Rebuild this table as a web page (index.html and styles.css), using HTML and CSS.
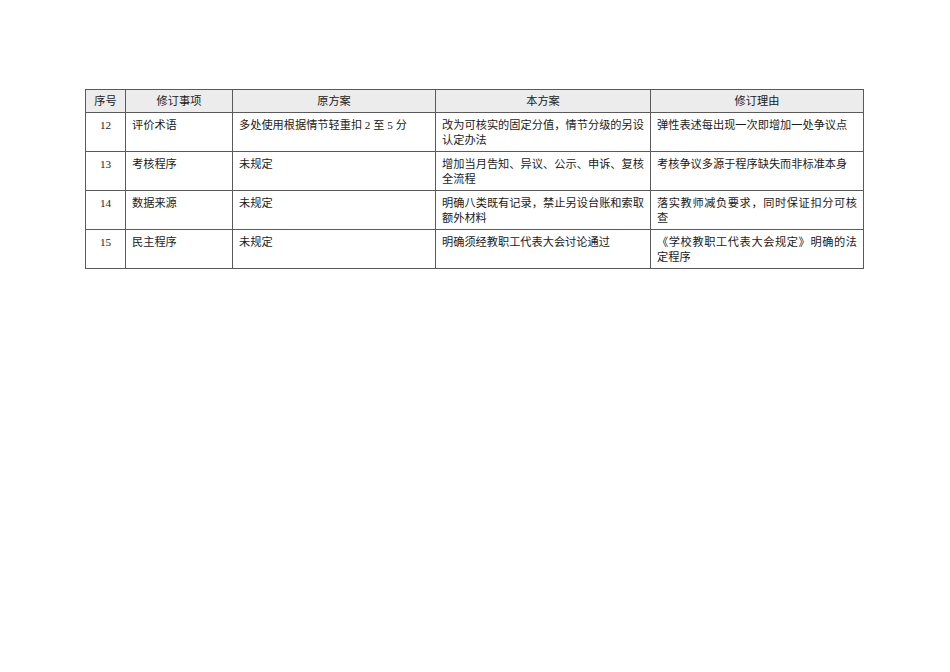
FILE: index.html
```html
<!DOCTYPE html>
<html lang="zh">
<head>
<meta charset="utf-8">
<link rel="stylesheet" href="styles.css">
</head>
<body>
<div class="page">
<table class="rev">
<colgroup>
<col class="c1"><col class="c2"><col class="c3"><col class="c4"><col class="c5">
</colgroup>
<thead>
<tr><th>序号</th><th>修订事项</th><th>原方案</th><th>本方案</th><th>修订理由</th></tr>
</thead>
<tbody>
<tr><td class="num">12</td><td>评价术语</td><td>多处使用根据情节轻重扣 2 至 5 分</td><td>改为可核实的固定分值，情节分级的另设认定办法</td><td>弹性表述每出现一次即增加一处争议点</td></tr>
<tr><td class="num">13</td><td>考核程序</td><td>未规定</td><td>增加当月告知、异议、公示、申诉、复核全流程</td><td>考核争议多源于程序缺失而非标准本身</td></tr>
<tr><td class="num">14</td><td>数据来源</td><td>未规定</td><td>明确八类既有记录，禁止另设台账和索取额外材料</td><td>落实教师减负要求，同时保证扣分可核查</td></tr>
<tr><td class="num">15</td><td>民主程序</td><td>未规定</td><td>明确须经教职工代表大会讨论通过</td><td>《学校教职工代表大会规定》明确的法定程序</td></tr>
</tbody>
</table>
</div>
</body>
</html>
```
FILE: styles.css
```css
html, body {
  margin: 0;
  padding: 0;
  background: #ffffff;
}
.page {
  padding: 89px 0 0 85px;
}
.rev {
  border-collapse: collapse;
  table-layout: fixed;
  width: 778px;
  font-family: "Liberation Serif", "Noto Sans CJK SC", sans-serif;
  font-size: 11.2px;
  color: #1a1a1a;
}
.c1 { width: 40px; }
.c2 { width: 107px; }
.c3 { width: 203px; }
.c4 { width: 215px; }
.c5 { width: 213px; }
.rev th, .rev td {
  border: 1px solid #5a5a5a;
  padding: 0 6px;
}
.rev th {
  height: 22px;
  background: #ececec;
  font-weight: normal;
  text-align: center;
  vertical-align: middle;
  line-height: 15px;
}
.rev td {
  height: 38px;
  box-sizing: border-box;
  vertical-align: top;
  padding-top: 5px;
  padding-bottom: 3px;
  line-height: 15px;
  text-align: justify;
}
.rev td.num {
  text-align: center;
}
```
